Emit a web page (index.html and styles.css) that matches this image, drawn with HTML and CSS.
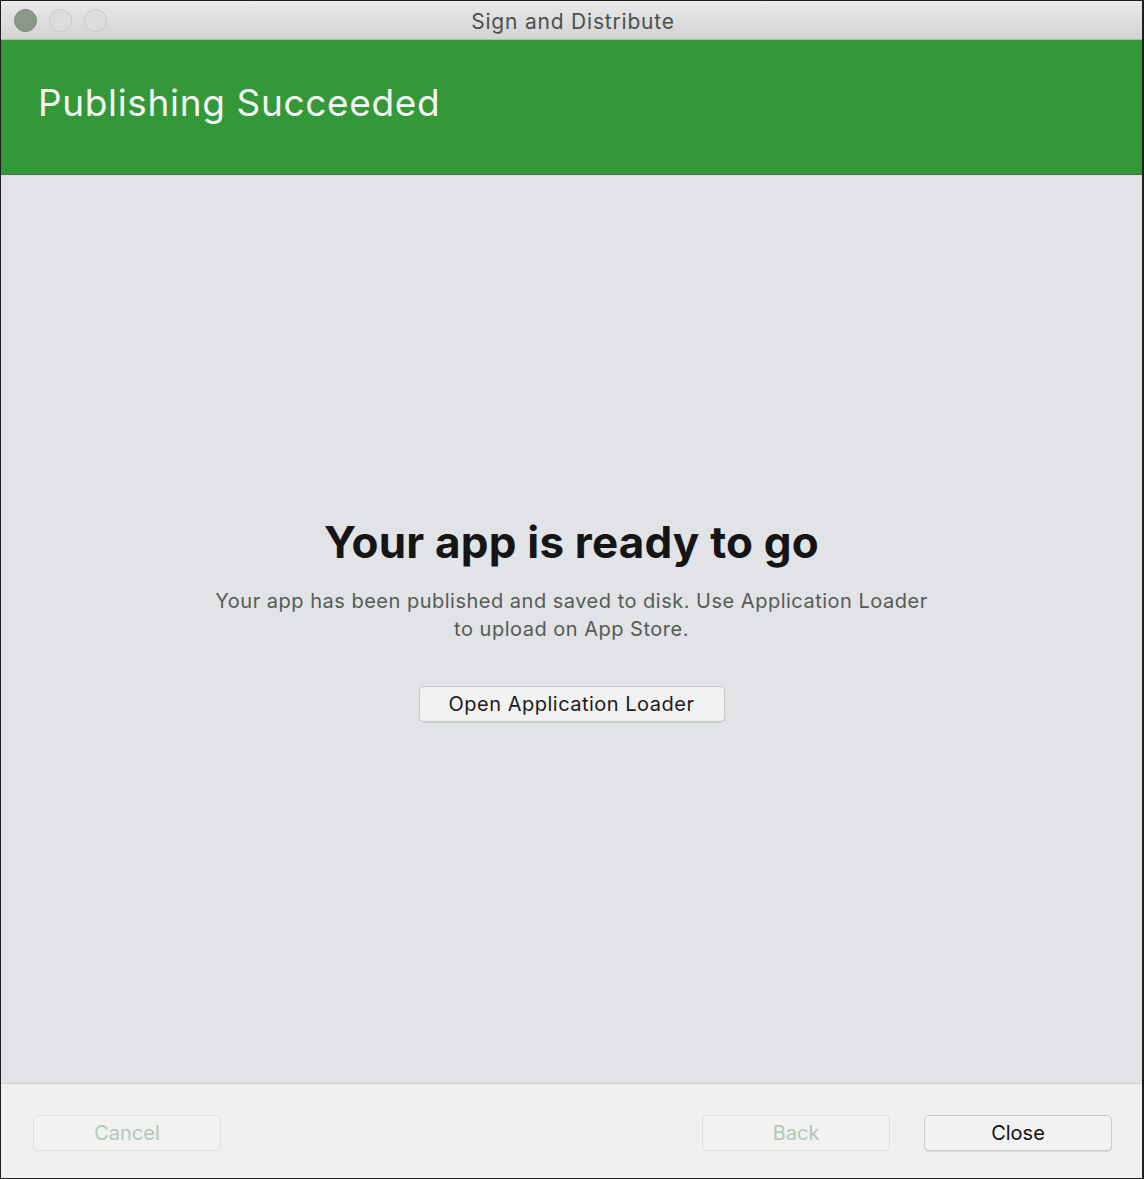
FILE: index.html
```html
<!DOCTYPE html>
<html lang="en">
<head>
<meta charset="utf-8">
<title>Sign and Distribute</title>
<link rel="stylesheet" href="styles.css">
</head>
<body>
<div class="window">
  <div class="titlebar">
    <div class="lights">
      <span class="light light-active"></span>
      <span class="light"></span>
      <span class="light"></span>
    </div>
    <div class="title">Sign and Distribute</div>
  </div>
  <div class="banner">
    <h1 class="banner-title">Publishing Succeeded</h1>
  </div>
  <main class="content">
    <div class="message">
      <h2 class="headline">Your app is ready to go</h2>
      <p class="desc">Your app has been published and saved to disk. Use Application Loader<br>to upload on App Store.</p>
      <button class="btn btn-loader">Open Application Loader</button>
    </div>
  </main>
  <footer class="footer">
    <button class="btn btn-foot btn-disabled">Cancel</button>
    <div class="spacer"></div>
    <div class="foot-right">
      <button class="btn btn-foot btn-disabled">Back</button>
      <button class="btn btn-foot btn-close">Close</button>
    </div>
  </footer>
</div>
</body>
</html>
```
FILE: styles.css
```css
* { box-sizing: border-box; }
html, body { margin: 0; padding: 0; }
body {
  width: 1144px;
  height: 1179px;
  font-family: Inter, "Noto Sans", "Liberation Sans", sans-serif;
  background: #1b1b1b;
}
.window {
  width: 1144px;
  height: 1179px;
  border: 1px solid #1e1e1e;
  border-right-width: 2px;
  display: flex;
  flex-direction: column;
  background: #e1e3e7;
  overflow: hidden;
}
.titlebar {
  height: 39px;
  flex: none;
  background: linear-gradient(#e9e9eb, #d3d3d5);
  border-bottom: 1px solid #b5b7b5;
  position: relative;
  display: flex;
  align-items: center;
  justify-content: center;
}
.lights {
  position: absolute;
  left: 13px;
  top: 8px;
  display: flex;
  gap: 12px;
}
.light {
  width: 23px;
  height: 23px;
  border-radius: 50%;
  border: 1px solid #c4cbc3;
  background: #dcdcde;
}
.light-active {
  background: #8c9887;
  border-color: #7e8a7a;
}
.title {
  font-size: 21px;
  color: #4b504b;
  letter-spacing: 0.8px;
  margin-left: 3px;
  margin-top: 2px;
}
.banner {
  height: 135px;
  flex: none;
  background: #339838;
  border-bottom: 1px solid #5b665b;
  display: flex;
  align-items: center;
  padding-left: 37px;
}
.banner-title {
  margin: 0 0 10px 0;
  font-size: 37px;
  font-weight: 400;
  color: #f4f6f4;
  letter-spacing: 0.65px;
}
.content {
  flex: 1;
  display: flex;
  align-items: center;
  justify-content: center;
  padding-bottom: 22px;
}
.message {
  display: flex;
  flex-direction: column;
  align-items: center;
  text-align: center;
}
.headline {
  margin: 0;
  font-size: 44px;
  line-height: 54px;
  font-weight: 700;
  color: #151515;
  letter-spacing: 0.2px;
}
.desc {
  margin: 18px 0 0 0;
  font-size: 20px;
  line-height: 28px;
  color: #555b55;
  letter-spacing: 0.5px;
}
.btn {
  font-family: inherit;
  height: 36px;
  border-radius: 5px;
  border: 1px solid #c7ccc6;
  background: #f1f2f1;
  font-size: 20px;
  color: #1c1c1c;
  padding: 0;
  box-shadow: 0 1px 0 rgba(160, 175, 160, 0.35);
}
.btn-loader {
  margin-top: 43px;
  width: 306px;
  letter-spacing: 0.5px;
}
.footer {
  height: 95px;
  flex: none;
  background: #eff0f0;
  border-top: 1px solid #cbcdcf;
  display: flex;
  align-items: flex-start;
  padding: 31px 30px 0 32px;
}
.spacer { flex: 1; }
.foot-right {
  display: flex;
  gap: 34px;
}
.btn-foot {
  width: 188px;
  height: 36px;
}
.btn-disabled {
  color: #b4c7b8;
  border-color: #dcdfdc;
  box-shadow: none;
}
.btn-close {
  color: #111;
}
```
